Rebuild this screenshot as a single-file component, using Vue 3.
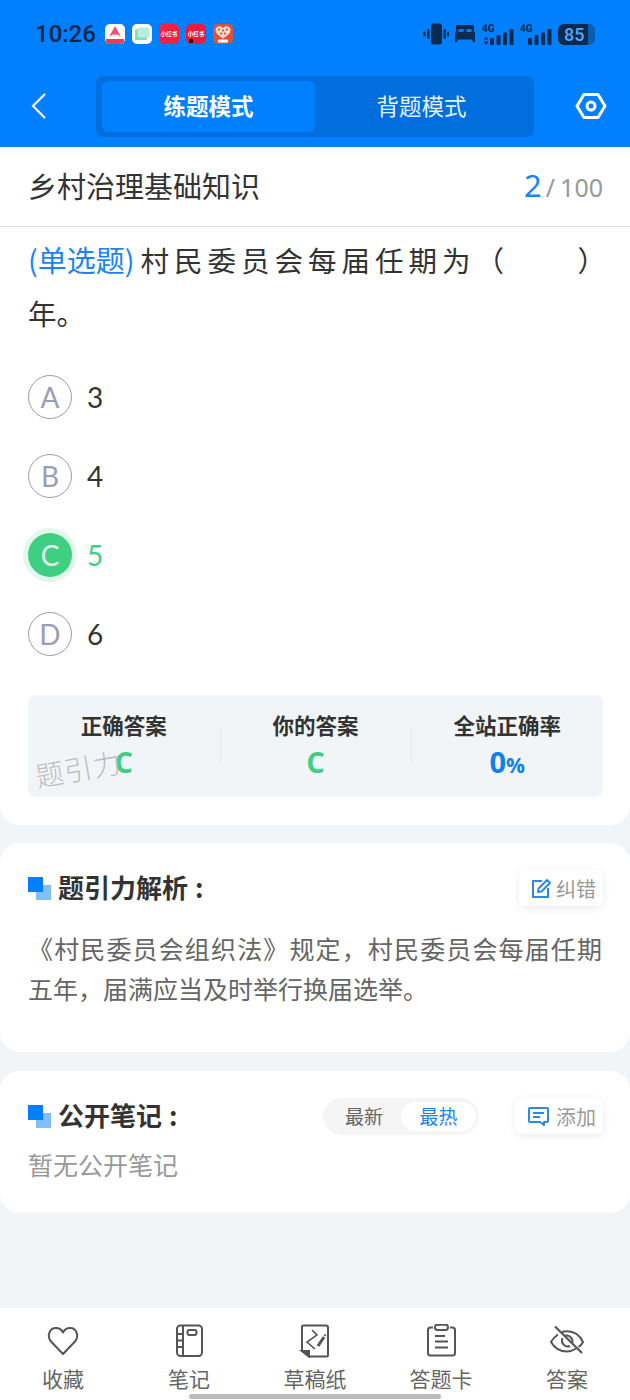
<script setup>
import { ref } from 'vue'

const options = ref([
  { key: 'A', text: '3' },
  { key: 'B', text: '4' },
  { key: 'C', text: '5', right: true },
  { key: 'D', text: '6' }
])

const stats = [
  { label: '正确答案', value: 'C', cls: 'green' },
  { label: '你的答案', value: 'C', cls: 'green' },
  { label: '全站正确率', value: '0', unit: '%', cls: 'blue' }
]

const tabs = [
  { label: '收藏', icon: 'heart' },
  { label: '笔记', icon: 'note' },
  { label: '草稿纸', icon: 'draft' },
  { label: '答题卡', icon: 'card' },
  { label: '答案', icon: 'eye' }
]
</script>

<template>
  <div class="page">
    <header class="header">
      <div class="status">
        <span class="time">10:26</span>
        <div class="apps">
          <span class="app">
            <svg width="20" height="20" viewBox="0 0 20 20"><path d="M10 2 L16 13 L12.500 10.500 L7.500 10.500 L4 13 Z" fill="#f0506a"/><rect x="1" y="15" width="18" height="5" fill="#ee3a55"/></svg>
          </span>
          <span class="app">
            <svg width="20" height="20" viewBox="0 0 20 20"><rect x="3" y="5" width="12" height="11" rx="1.500" fill="#7fdcbc"/><rect x="5.500" y="3.500" width="12" height="10" rx="1.500" fill="#b5eedb"/></svg>
          </span>
          <span class="app app-red">小红书</span>
          <span class="app app-red dark">小红书<b></b></span>
          <span class="app app-tree">
            <svg width="20" height="20" viewBox="0 0 20 20"><path d="M10 14.500 C5 11.500 2.500 9 2.500 6 C2.500 3 6 1.500 8 2.500 L10 4 L12 2.500 C14 1.500 17.500 3 17.500 6 C17.500 9 15 11.500 10 14.500 Z" fill="#fbd9c8"/><circle cx="6" cy="5.500" r="1" fill="#d8352a"/><circle cx="10" cy="6.500" r="1" fill="#d8352a"/><circle cx="14" cy="5.500" r="1" fill="#d8352a"/><circle cx="8" cy="9.500" r="1" fill="#d8352a"/><circle cx="12" cy="9.500" r="1" fill="#d8352a"/><rect x="5" y="15.500" width="10" height="3" rx="1" fill="#fff"/></svg>
          </span>
        </div>
        <div class="sys">
          <svg width="26" height="22" viewBox="0 0 26 22" fill="#0a2a50"><rect x="8" y="0.500" width="11" height="21" rx="2.500"/><rect x="4" y="6" width="2.500" height="10" rx="1"/><rect x="0.500" y="8.500" width="2" height="5" rx="1"/><rect x="20.500" y="6" width="2.500" height="10" rx="1"/><rect x="24" y="8.500" width="2" height="5" rx="1"/></svg>
          <svg width="20" height="18" viewBox="0 0 20 18" fill="#0a2a50"><path d="M2 0 H18 Q19 0 19 1 V7 H20 V17 H17.500 V14.500 H2.500 V17 H0 V7 H1 V1 Q1 0 2 0 Z M3.500 7 H8.500 V4 H3.500 Z M11.500 7 H16.500 V4 H11.500 Z" fill-rule="evenodd"/></svg>
          <span class="signal first-signal">
            <em>4G</em>
            <svg width="32" height="16" viewBox="0 0 32 16" fill="#0a2a50"><path d="M4 7.500 L6.500 10.500 H1.500 Z M4 16 L1.500 12.500 H6.500 Z"/><rect x="8" y="9" width="4" height="7" rx="1"/><rect x="14.500" y="6" width="4" height="10" rx="1"/><rect x="21" y="3.500" width="4" height="12.500" rx="1"/><rect x="27.500" y="0" width="4" height="16" rx="1"/></svg>
          </span>
          <span class="signal">
            <em>4G</em>
            <svg width="32" height="16" viewBox="0 0 32 16" fill="#0a2a50"><rect x="8" y="9" width="4" height="7" rx="1"/><rect x="14.500" y="6" width="4" height="10" rx="1"/><rect x="21" y="3.500" width="4" height="12.500" rx="1"/><rect x="27.500" y="0" width="4" height="16" rx="1"/></svg>
          </span>
          <span class="battery"><span>85</span></span>
        </div>
      </div>
      <div class="nav">
        <svg class="back" width="18" height="28" viewBox="0 0 18 28" fill="none" stroke="#fff" stroke-width="2.200"><path d="M15 2 L3 14 L15 26"/></svg>
        <div class="switch">
          <div class="mode active">练题模式</div>
          <div class="mode">背题模式</div>
        </div>
        <svg class="gear" width="32" height="28" viewBox="0 0 32 28" fill="none" stroke="#fff" stroke-width="3"><path d="M9 2.500 H23 L30 14 L23 25.500 H9 L2 14 Z" stroke-linejoin="round"/><circle cx="16" cy="14" r="4"/></svg>
      </div>
    </header>

    <section class="card first">
      <div class="title-row">
        <span class="title">乡村治理基础知识</span>
        <span class="count"><b>2</b><i>/</i>100</span>
      </div>
      <div class="body">
        <p class="question"><span class="line"><span class="type">(单选题)</span><span class="stem">村民委员会每届任期为（&nbsp;&nbsp;&nbsp;&nbsp;&nbsp;&nbsp;）</span></span>年。</p>
        <ul class="options">
          <li v-for="o in options" :key="o.key" class="option" :class="{ right: o.right }">
            <span class="letter">{{ o.key }}</span>
            <span class="val">{{ o.text }}</span>
          </li>
        </ul>
        <div class="stats">
          <div v-for="(s, i) in stats" :key="s.label" class="stat">
            <div class="stat-label">{{ s.label }}</div>
            <div class="stat-value" :class="s.cls">{{ s.value }}<small v-if="s.unit">{{ s.unit }}</small></div>
            <span v-if="i === 0" class="mark">题引力</span>
          </div>
        </div>
      </div>
    </section>

    <section class="card analysis">
      <div class="sec-head">
        <span class="squares"></span>
        <h2>题引力解析<i>:</i></h2>
        <button class="chip">
          <svg width="21" height="21" viewBox="0 0 21 21" fill="none" stroke="#2b8ae6" stroke-width="2"><path d="M11 3 H2 V19 H17 V10"/><path d="M7 14 L7.500 10.500 L16 2 L19 5 L10.500 13.500 Z" stroke-linejoin="round"/></svg>
          纠错
        </button>
      </div>
      <p class="analysis-text">《村民委员会组织法》规定，村民委员会每届任期五年，届满应当及时举行换届选举。</p>
    </section>

    <section class="card notes">
      <div class="sec-head">
        <span class="squares"></span>
        <h2>公开笔记<i>:</i></h2>
        <div class="sort">
          <span>最新</span>
          <span class="on">最热</span>
        </div>
        <button class="chip">
          <svg class="add-icon" width="23" height="21" viewBox="0 0 23 21" fill="none" stroke="#2b8ae6" stroke-width="2"><path d="M3 2 H20 Q21 2 21 3 V15 Q21 16 20 16 H17 V19 L13 16 H3 Q2 16 2 15 V3 Q2 2 3 2 Z" stroke-linejoin="round"/><path d="M6 7 H17 M6 11 H13"/></svg>
          添加
        </button>
      </div>
      <p class="empty">暂无公开笔记</p>
    </section>

    <nav class="tabbar">
      <div v-for="t in tabs" :key="t.label" class="tab">
        <svg width="34" height="34" viewBox="0 0 34 34" fill="none" stroke="#555" stroke-width="2">
          <path v-if="t.icon === 'heart'" d="M17 30 L5 17.500 C0.500 12 3.500 4 10 4 C13 4 15.500 5.500 17 8.500 C18.500 5.500 21 4 24 4 C30.500 4 33.500 12 29 17.500 Z" stroke-linejoin="round"/>
          <g v-if="t.icon === 'note'">
            <rect x="5" y="1.500" width="25" height="30.500" rx="3.500"/>
            <path d="M11 1.500 V32 M5 10 H11 M5 16.500 H11 M5 23 H11"/>
            <rect x="15.500" y="6" width="9" height="5" rx="2"/>
          </g>
          <g v-if="t.icon === 'draft'">
            <path d="M4 27 V3 Q4 1.500 5.500 1.500 H28 Q30 1.500 30 3.500 V31 Q30 32.500 28.500 32.500 H11 Z" stroke-linejoin="round"/>
            <path d="M4 27 H11 V32.500 Z" fill="#555"/>
            <path d="M14 6 L19 11 L9 18 L17 25" stroke-width="1.600"/>
            <path d="M20 22 L26 13" stroke-width="3"/>
            <path d="M26.500 12 L27.500 10.500" stroke-width="2"/>
          </g>
          <g v-if="t.icon === 'card'">
            <path d="M9 3.500 H6.500 Q4 3.500 4 6 V29 Q4 31.500 6.500 31.500 H28.500 Q31 31.500 31 29 V6 Q31 3.500 28.500 3.500 H26"/>
            <rect x="11" y="0.800" width="13" height="5.200" rx="2.400"/>
            <path d="M11 12 H21 M11 17.500 H24 M11 23.500 H24"/>
          </g>
          <g v-if="t.icon === 'eye'">
            <path d="M8 10.500 C5 12.500 2.500 15 1 18 C4.500 24 10 27.500 17 27.500 C20 27.500 23 26.500 26 24.500 M12 8 C13.500 7.500 15.500 7.200 17 7.200 C24 7.200 30 11.500 33 18 C32 20 30.500 21.800 28.500 23"/>
            <path d="M5 2.500 L32 29" stroke-width="2.200"/>
            <path d="M12.500 14 C10.500 19 15 24 20 22 M15 11.700 C19 10.500 23 14 22.500 18.500"/>
          </g>
        </svg>
        <span>{{ t.label }}</span>
      </div>
      <i class="home"></i>
    </nav>
  </div>
</template>

<style>
html, body {
  margin: 0;
  background: #f2f5f8;
}
</style>

<style scoped>
.page {
  width: 630px;
  height: 1400px;
  position: relative;
  overflow: hidden;
  background: #f2f5f8;
  font-family: "Noto Sans CJK SC", "Noto Sans", sans-serif;
  color: #333;
}

.header {
  height: 147px;
  background: #0080ff;
  box-sizing: border-box;
  padding-top: 20px;
}
.status {
  display: flex;
  align-items: center;
  height: 28px;
  padding: 0 35px;
}
.time {
  font-family: Roboto, sans-serif;
  font-size: 24px;
  font-weight: 500;
  color: #0b2545;
  width: 70px;
}
.apps {
  display: flex;
  gap: 7px;
}
.app {
  width: 20px;
  height: 20px;
  border-radius: 5px;
  overflow: hidden;
  background: #fff;
  display: flex;
  align-items: center;
  justify-content: center;
  position: relative;
}
.app-red {
  background: #f5203f;
  color: #fff;
  font-size: 5.500px;
  font-weight: 700;
  white-space: nowrap;
}
.app-red.dark {
  background: #e81c3c;
}
.app-red b {
  position: absolute;
  left: 3px;
  bottom: 1px;
  width: 4px;
  height: 4px;
  background: #200;
  border-radius: 1px;
}
.app-tree {
  background: #e2503a;
}
.sys {
  margin-left: auto;
  display: flex;
  align-items: center;
  gap: 6px;
}
.signal {
  position: relative;
  display: block;
  height: 21px;
  width: 32px;
}
.first-signal {
  margin-left: 1px;
}
.signal em {
  position: absolute;
  left: 0;
  top: -1px;
  font: 700 10px/11px Roboto, sans-serif;
  color: #0a2a50;
}
.signal svg {
  position: absolute;
  left: 0;
  bottom: 0;
}
.battery {
  width: 37px;
  height: 21px;
  border-radius: 6px;
  background: linear-gradient(90deg, #0a2a50 80%, #0a5db3 80%);
  display: flex;
  align-items: center;
  padding-left: 6px;
  box-sizing: border-box;
}
.battery span {
  font: 500 18px/21px Roboto, sans-serif;
  color: #5aa5f0;
}

.nav {
  display: flex;
  align-items: center;
  margin-top: 27px;
  height: 62px;
}
.back {
  margin-left: 30px;
}
.switch {
  display: flex;
  width: 438px;
  height: 61px;
  margin-left: 48px;
  box-sizing: border-box;
  padding: 5px 6px;
  border-radius: 7px;
  background: #006fdd;
}
.mode {
  flex: 1;
  display: flex;
  align-items: center;
  justify-content: center;
  font-size: 22.500px;
  color: #e6f1ff;
  border-radius: 6px;
  padding-bottom: 3px;
  box-sizing: border-box;
}
.mode.active {
  background: #0080ff;
  color: #fff;
  font-weight: 700;
}
.gear {
  margin-left: 41px;
}

.card {
  background: #fff;
  border-radius: 20px;
}
.first {
  border-radius: 0 0 20px 20px;
  height: 678px;
}
.title-row {
  height: 80px;
  box-sizing: border-box;
  border-bottom: 1px solid #ddd;
  display: flex;
  align-items: center;
  justify-content: space-between;
  padding: 0 27px 3px 28px;
}
.title {
  font-size: 29px;
  color: #333;
}
.count {
  font-size: 25px;
  color: #999;
  font-family: "Noto Sans", sans-serif;
}
.count b {
  font-weight: 400;
  font-size: 31px;
  color: #1a85f0;
}
.count i {
  font-style: normal;
  margin: 0 5px 0 4px;
}
.body {
  padding: 6px 27px 0 28px;
}
.question {
  margin: 0;
  font-size: 28.500px;
  line-height: 53px;
  color: #333;
}
.line {
  white-space: nowrap;
}
.type {
  color: #1a85f0;
  font-size: 29px;
  margin-right: 6px;
}
.stem {
  letter-spacing: 5px;
}
.options {
  list-style: none;
  margin: 18px 0 0;
  padding: 0;
}
.option {
  display: flex;
  align-items: center;
  height: 79px;
}
.letter {
  width: 44px;
  height: 44px;
  box-sizing: border-box;
  border: 1.500px solid #9a9db3;
  border-radius: 50%;
  display: flex;
  align-items: center;
  justify-content: center;
  font: 400 28px Lato, sans-serif;
  color: #9a9db3;
}
.val {
  margin-left: 15px;
  font: 400 28px Lato, sans-serif;
  color: #333;
}
.option.right .letter {
  border: none;
  background: #3ecf82;
  color: #e8fbf1;
  box-shadow: 0 0 0 5px #e2f8ec;
}
.option.right .val {
  color: #3ecf82;
}
.stats {
  display: flex;
  height: 102px;
  margin-top: 22px;
  background: #f2f5f8;
  border-radius: 8px;
}
.stat {
  flex: 1;
  position: relative;
  text-align: center;
  padding-top: 15px;
}
.stat + .stat::before {
  content: "";
  position: absolute;
  left: 0;
  top: 33px;
  height: 38px;
  width: 1px;
  background: #e9edf1;
}
.stat-label {
  font-size: 21.500px;
  line-height: 30px;
  font-weight: 700;
  color: #333;
}
.stat-value {
  margin-top: 4px;
  font-family: "Open Sans", sans-serif;
  font-size: 29px;
  line-height: 36px;
  font-weight: 700;
}
.stat-value small {
  font-size: 21px;
}
.green {
  color: #3ecf82;
}
.blue {
  color: #0f80f0;
}
.mark {
  position: absolute;
  left: 7px;
  top: 55px;
  font-size: 28px;
  line-height: 36px;
  font-weight: 300;
  color: #bdbdbd;
  transform: rotate(-10deg);
  white-space: nowrap;
  letter-spacing: 1px;
}

.analysis {
  margin-top: 18px;
  height: 209px;
  padding: 0 27px 0 28px;
  box-sizing: border-box;
}
.notes {
  margin-top: 19px;
  height: 142px;
  padding: 0 27px 0 28px;
  box-sizing: border-box;
}
.sec-head {
  display: flex;
  align-items: center;
  padding-top: 27px;
  height: 36px;
}
.squares {
  position: relative;
  width: 23px;
  height: 23px;
  flex: none;
}
.squares::before,
.squares::after {
  content: "";
  position: absolute;
  width: 15px;
  height: 15px;
}
.squares::before {
  right: 0;
  bottom: 0;
  background: #80bfff;
}
.squares::after {
  left: 0;
  top: 0;
  background: #0080ff;
}
.sec-head h2 {
  margin: 0 0 0 7px;
  padding-bottom: 2px;
  font-size: 26px;
  line-height: 34px;
  font-weight: 700;
  color: #333;
  flex: 1;
}
.sec-head h2 i {
  font-style: normal;
  margin-left: 7px;
}
.chip {
  display: flex;
  align-items: center;
  gap: 4px;
  height: 36px;
  padding: 0 7px 0 12px;
  border: none;
  border-radius: 6px;
  background: #fff;
  box-shadow: 0 2px 8px rgba(0, 0, 0, 0.08);
  font-family: inherit;
  font-size: 20px;
  color: #999;
}
.add-icon {
  margin-right: 2px;
}
.analysis-text {
  margin: 22px 1px 0 0;
  font-size: 25px;
  line-height: 40px;
  color: #666;
  text-align: justify;
}
.sort {
  display: flex;
  align-items: center;
  height: 37px;
  width: 156px;
  border-radius: 19px;
  background: #f5f5f5;
  box-sizing: border-box;
  padding: 4px 3px 4px 4px;
  font-size: 19px;
  color: #666;
  margin-right: 36px;
}
.sort span {
  flex: 1;
  text-align: center;
  line-height: 27px;
  height: 29px;
}
.sort .on {
  background: #fff;
  border-radius: 15px;
  color: #1a85f0;
  flex: 0 0 75px;
}
.empty {
  margin: 10px 0 0;
  font-size: 25px;
  line-height: 40px;
  color: #999;
}

.tabbar {
  position: absolute;
  left: 0;
  right: 0;
  bottom: 0;
  height: 92px;
  background: #fff;
  display: flex;
  padding: 16px 0 0;
  box-sizing: border-box;
}
.tab {
  flex: 1;
  display: flex;
  flex-direction: column;
  align-items: center;
  font-size: 21px;
  line-height: 30px;
  color: #666;
}
.tab span {
  margin-top: 5px;
}
.home {
  position: absolute;
  left: 189px;
  bottom: 1px;
  width: 252px;
  height: 5px;
  border-radius: 3px;
  background: #bbb;
}
</style>
